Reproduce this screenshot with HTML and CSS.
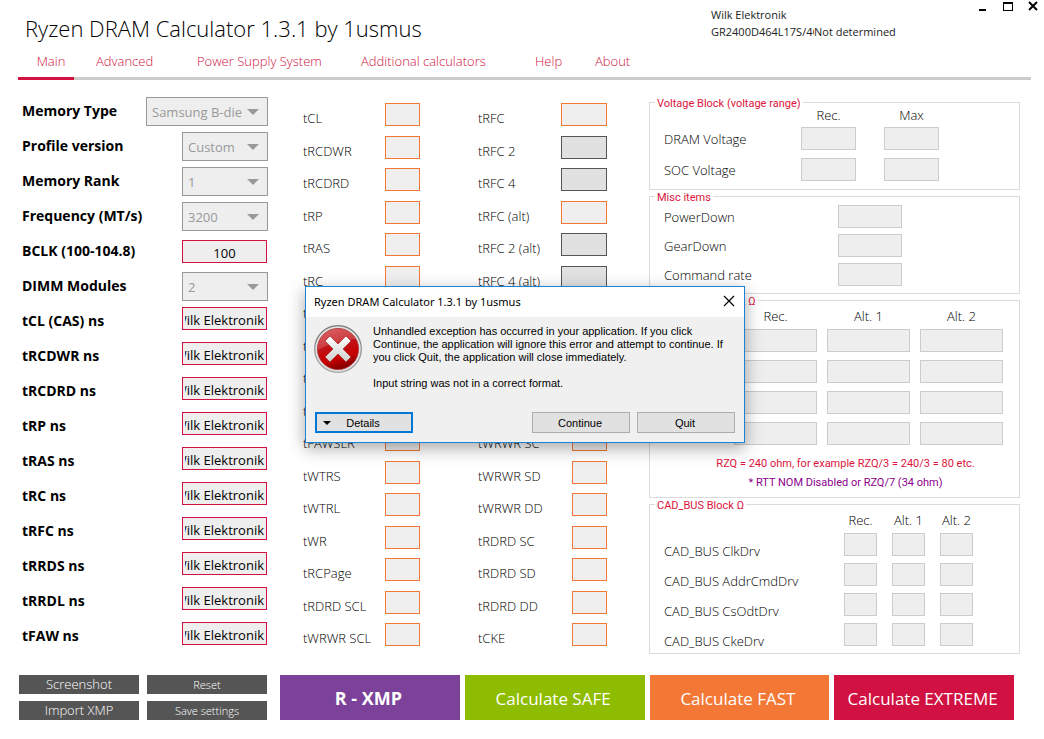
FILE: index.html
```html
<!DOCTYPE html>
<html lang="en">
<head>
<meta charset="utf-8">
<title>Ryzen DRAM Calculator 1.3.1 by 1usmus</title>
<link rel="stylesheet" href="styles.css">
</head>
<body>
<header class="titlebar">
  <h1 class="title">Ryzen DRAM Calculator 1.3.1 by 1usmus</h1>
  <div class="module">
    <div>Wilk Elektronik</div>
    <div class="module-row"><span class="module-part">GR2400D464L17S/4G</span><span>Not determined</span></div>
  </div>
  <div class="window-controls">
    <button class="window-btn" aria-label="Minimize"><svg width="12" height="12" viewBox="0 0 12 12"><path d="M2 8h7v2H2z"/></svg></button>
    <button class="window-btn" aria-label="Maximize"><svg width="12" height="12" viewBox="0 0 12 12"><path fill-rule="evenodd" d="M1 1h10v9H1zM2 3h8v6H2z"/></svg></button>
    <button class="window-btn" aria-label="Close"><svg width="12" height="12" viewBox="0 0 12 12"><path d="M2 1l8 8M10 1l-8 8" fill="none" stroke="#000" stroke-width="2"/></svg></button>
  </div>
</header>

<nav class="tabs">
  <a class="tab tab-active" href="#main">Main</a>
  <a class="tab" href="#advanced">Advanced</a>
  <a class="tab" href="#power">Power Supply System</a>
  <a class="tab" href="#calculators">Additional calculators</a>
  <a class="tab" href="#help">Help</a>
  <a class="tab" href="#about">About</a>
</nav>

<main class="board">
  <section class="fields">
    <div class="field"><label for="memtype">Memory Type</label><span class="pick pick-wide"><select id="memtype" disabled><option>Samsung B-die</option></select></span></div>
    <div class="field"><label for="profile">Profile version</label><span class="pick"><select id="profile" disabled><option>Custom</option></select></span></div>
    <div class="field"><label for="rank">Memory Rank</label><span class="pick"><select id="rank" disabled><option>1</option></select></span></div>
    <div class="field"><label for="freq">Frequency (MT/s)</label><span class="pick"><select id="freq" disabled><option>3200</option></select></span></div>
    <div class="field"><label for="bclk">BCLK (100-104.8)</label><input class="entry entry-center" id="bclk" value="100"></div>
    <div class="field"><label for="dimm">DIMM Modules</label><span class="pick"><select id="dimm" disabled><option>2</option></select></span></div>
    <div class="field field-time"><label for="ns1">tCL (CAS) ns</label><input class="entry" dir="rtl" id="ns1" value="Wilk Elektronik"></div>
    <div class="field field-time"><label for="ns2">tRCDWR ns</label><input class="entry" dir="rtl" id="ns2" value="Wilk Elektronik"></div>
    <div class="field field-time"><label for="ns3">tRCDRD ns</label><input class="entry" dir="rtl" id="ns3" value="Wilk Elektronik"></div>
    <div class="field field-time"><label for="ns4">tRP ns</label><input class="entry" dir="rtl" id="ns4" value="Wilk Elektronik"></div>
    <div class="field field-time"><label for="ns5">tRAS ns</label><input class="entry" dir="rtl" id="ns5" value="Wilk Elektronik"></div>
    <div class="field field-time"><label for="ns6">tRC ns</label><input class="entry" dir="rtl" id="ns6" value="Wilk Elektronik"></div>
    <div class="field field-time"><label for="ns7">tRFC ns</label><input class="entry" dir="rtl" id="ns7" value="Wilk Elektronik"></div>
    <div class="field field-time"><label for="ns8">tRRDS ns</label><input class="entry" dir="rtl" id="ns8" value="Wilk Elektronik"></div>
    <div class="field field-time"><label for="ns9">tRRDL ns</label><input class="entry" dir="rtl" id="ns9" value="Wilk Elektronik"></div>
    <div class="field field-time"><label for="ns10">tFAW ns</label><input class="entry" dir="rtl" id="ns10" value="Wilk Elektronik"></div>
  </section>

  <section class="timings timings-first">
    <div class="timing"><label for="a1">tCL</label><input class="cell" id="a1"></div>
    <div class="timing"><label for="a2">tRCDWR</label><input class="cell" id="a2"></div>
    <div class="timing"><label for="a3">tRCDRD</label><input class="cell" id="a3"></div>
    <div class="timing"><label for="a4">tRP</label><input class="cell" id="a4"></div>
    <div class="timing"><label for="a5">tRAS</label><input class="cell" id="a5"></div>
    <div class="timing"><label for="a6">tRC</label><input class="cell" id="a6"></div>
    <div class="timing"><label for="a7">tRRDS</label><input class="cell" id="a7"></div>
    <div class="timing"><label for="a8">tRRDL</label><input class="cell" id="a8"></div>
    <div class="timing"><label for="a9">tFAW</label><input class="cell" id="a9"></div>
    <div class="timing"><label for="a10">tFAWDLR</label><input class="cell" id="a10"></div>
    <div class="timing"><label for="a11">tFAWSLR</label><input class="cell" id="a11"></div>
    <div class="timing"><label for="a12">tWTRS</label><input class="cell" id="a12"></div>
    <div class="timing"><label for="a13">tWTRL</label><input class="cell" id="a13"></div>
    <div class="timing"><label for="a14">tWR</label><input class="cell" id="a14"></div>
    <div class="timing"><label for="a15">tRCPage</label><input class="cell" id="a15"></div>
    <div class="timing"><label for="a16">tRDRD SCL</label><input class="cell" id="a16"></div>
    <div class="timing"><label for="a17">tWRWR SCL</label><input class="cell" id="a17"></div>
  </section>

  <section class="timings timings-second">
    <div class="timing"><label for="b1">tRFC</label><input class="cell cell-wide" id="b1"></div>
    <div class="timing"><label for="b2">tRFC 2</label><input class="cell cell-wide cell-dark" id="b2"></div>
    <div class="timing"><label for="b3">tRFC 4</label><input class="cell cell-wide cell-dark" id="b3"></div>
    <div class="timing"><label for="b4">tRFC (alt)</label><input class="cell cell-wide" id="b4"></div>
    <div class="timing"><label for="b5">tRFC 2 (alt)</label><input class="cell cell-wide cell-dark" id="b5"></div>
    <div class="timing"><label for="b6">tRFC 4 (alt)</label><input class="cell cell-wide cell-dark" id="b6"></div>
    <div class="timing"><label for="b7">tRTP</label><input class="cell" id="b7"></div>
    <div class="timing"><label for="b8">tRDWR</label><input class="cell" id="b8"></div>
    <div class="timing"><label for="b9">tWRRD</label><input class="cell" id="b9"></div>
    <div class="timing"><label for="b10">tCWL</label><input class="cell" id="b10"></div>
    <div class="timing"><label for="b11">tWRWR SC</label><input class="cell" id="b11"></div>
    <div class="timing"><label for="b12">tWRWR SD</label><input class="cell" id="b12"></div>
    <div class="timing"><label for="b13">tWRWR DD</label><input class="cell" id="b13"></div>
    <div class="timing"><label for="b14">tRDRD SC</label><input class="cell" id="b14"></div>
    <div class="timing"><label for="b15">tRDRD SD</label><input class="cell" id="b15"></div>
    <div class="timing"><label for="b16">tRDRD DD</label><input class="cell" id="b16"></div>
    <div class="timing"><label for="b17">tCKE</label><input class="cell" id="b17"></div>
  </section>

  <section class="panels">
    <fieldset class="panel">
      <legend>Voltage Block (voltage range)</legend>
      <div class="matrix matrix-voltage">
        <span></span><span class="head">Rec.</span><span class="head">Max</span>
        <label for="v1">DRAM Voltage</label><input class="slot" id="v1"><input class="slot" aria-label="DRAM Voltage max">
        <label for="v2">SOC Voltage</label><input class="slot" id="v2"><input class="slot" aria-label="SOC Voltage max">
      </div>
    </fieldset>
    <fieldset class="panel">
      <legend>Misc items</legend>
      <div class="matrix matrix-misc">
        <label for="m1">PowerDown</label><input class="slot" id="m1">
        <label for="m2">GearDown</label><input class="slot" id="m2">
        <label for="m3">Command rate</label><input class="slot" id="m3">
      </div>
    </fieldset>
    <fieldset class="panel">
      <legend>Termination Block Ω</legend>
      <div class="matrix matrix-term">
        <span></span><span class="head">Rec.</span><span class="head">Alt. 1</span><span class="head">Alt. 2</span>
        <label for="t1">procODT</label><input class="slot" id="t1"><input class="slot" aria-label="procODT alt 1"><input class="slot" aria-label="procODT alt 2">
        <label for="t2">RTT NOM</label><input class="slot" id="t2"><input class="slot" aria-label="RTT NOM alt 1"><input class="slot" aria-label="RTT NOM alt 2">
        <label for="t3">RTT WR</label><input class="slot" id="t3"><input class="slot" aria-label="RTT WR alt 1"><input class="slot" aria-label="RTT WR alt 2">
        <label for="t4">RTT PARK</label><input class="slot" id="t4"><input class="slot" aria-label="RTT PARK alt 1"><input class="slot" aria-label="RTT PARK alt 2">
      </div>
      <div class="notes">
        <p class="note">RZQ = 240 ohm, for example RZQ/3 = 240/3 = 80 etc.</p>
        <p class="note note-purple">* RTT NOM Disabled or RZQ/7 (34 ohm)</p>
      </div>
    </fieldset>
    <fieldset class="panel">
      <legend>CAD_BUS Block Ω</legend>
      <div class="matrix matrix-cad">
        <span></span><span class="head">Rec.</span><span class="head">Alt. 1</span><span class="head">Alt. 2</span>
        <label for="c1">CAD_BUS ClkDrv</label><input class="slot" id="c1"><input class="slot" aria-label="ClkDrv alt 1"><input class="slot" aria-label="ClkDrv alt 2">
        <label for="c2">CAD_BUS AddrCmdDrv</label><input class="slot" id="c2"><input class="slot" aria-label="AddrCmdDrv alt 1"><input class="slot" aria-label="AddrCmdDrv alt 2">
        <label for="c3">CAD_BUS CsOdtDrv</label><input class="slot" id="c3"><input class="slot" aria-label="CsOdtDrv alt 1"><input class="slot" aria-label="CsOdtDrv alt 2">
        <label for="c4">CAD_BUS CkeDrv</label><input class="slot" id="c4"><input class="slot" aria-label="CkeDrv alt 1"><input class="slot" aria-label="CkeDrv alt 2">
      </div>
    </fieldset>
  </section>
</main>

<footer class="actions">
  <div class="utility">
    <button class="small-btn small-btn-large-text">Screenshot</button>
    <button class="small-btn">Reset</button>
    <button class="small-btn small-btn-large-text">Import XMP</button>
    <button class="small-btn">Save settings</button>
  </div>
  <div class="calculate">
    <button class="big-btn big-purple">R - XMP</button>
    <button class="big-btn big-green">Calculate SAFE</button>
    <button class="big-btn big-orange">Calculate FAST</button>
    <button class="big-btn big-red">Calculate EXTREME</button>
  </div>
</footer>

<div class="dialog" role="dialog" aria-labelledby="dialog-title">
  <div class="dialog-bar">
    <h2 class="dialog-title" id="dialog-title">Ryzen DRAM Calculator 1.3.1 by 1usmus</h2>
    <button class="window-btn" aria-label="Close dialog"><svg width="12" height="12" viewBox="0 0 12 12"><path d="M1 1l10 10M11 1L1 11" fill="none" stroke="#000" stroke-width="1.2"/></svg></button>
  </div>
  <div class="dialog-body">
    <svg class="dialog-icon" width="48" height="48" viewBox="0 0 48 48" aria-hidden="true">
      <defs>
        <linearGradient id="ring" x1="0" y1="0" x2="0" y2="1"><stop offset="0" stop-color="#777"/><stop offset="1" stop-color="#a5a5a5"/></linearGradient>
        <linearGradient id="ball" x1="0" y1="0" x2="0.3" y2="1"><stop offset="0" stop-color="#d8474a"/><stop offset="0.5" stop-color="#c01317"/><stop offset="0.8" stop-color="#c80000"/><stop offset="1" stop-color="#8e0000"/></linearGradient>
        <linearGradient id="cross" x1="0" y1="0" x2="0" y2="1"><stop offset="0" stop-color="#fff"/><stop offset="1" stop-color="#cfcfcf"/></linearGradient>
      </defs>
      <circle cx="24" cy="24" r="23.3" fill="#e2e2e2" stroke="url(#ring)" stroke-width="1.2"/>
      <circle cx="24" cy="24" r="20.6" fill="url(#ball)" stroke="#a33" stroke-width="0.8"/>
      <path d="M4 25C3 12 14 4 24 4c9 0 15 4 18 10C32 14 17 18 4 25z" fill="#fff" opacity="0.16"/>
      <path d="M16 11l8 8 8-8 5 5-8 8 8 8-5 5-8-8-8 8-5-5 8-8-8-8z" fill="url(#cross)" stroke="#a01518" stroke-width="0.6"/>
    </svg>
    <div class="dialog-text">
      <p>Unhandled exception has occurred in your application. If you click<br>Continue, the application will ignore this error and attempt to continue. If<br>you click Quit, the application will close immediately.</p>
      <p>Input string was not in a correct format.</p>
    </div>
  </div>
  <div class="dialog-actions">
    <button class="dialog-btn dialog-btn-focus"><svg class="details-arrow" width="8" height="4" viewBox="0 0 8 4" aria-hidden="true"><path d="M0 0h8L4 4z"/></svg>Details</button>
    <button class="dialog-btn dialog-btn-push">Continue</button>
    <button class="dialog-btn">Quit</button>
  </div>
</div>
</body>
</html>
```
FILE: styles.css
```css
* { box-sizing: border-box; }
body {
  margin: 0;
  background: #fff;
  color: #000;
  font-family: "Open Sans", "Noto Sans", sans-serif;
  font-size: 13px;
  font-weight: 300;
}
button, input, select { font: inherit; border-radius: 0; }
p, h1, h2 { margin: 0; }

.titlebar { display: flex; height: 47px; padding-left: 25px; }
.title { flex: 1; padding-top: 12px; font-size: 22px; line-height: 32px; font-weight: 300; }
.module { width: 266px; padding-top: 6px; font-size: 11px; line-height: 17px; font-weight: 400; color: #222; }
.module-row { display: flex; white-space: nowrap; }
.module-part { width: 103px; overflow: hidden; }
.window-controls { display: flex; gap: 13px; align-items: start; padding-right: 5px; }
.window-btn { display: flex; padding: 0; border: 0; background: none; }
.window-controls .window-btn { padding-top: 1px; }

.tabs {
  display: grid;
  grid-template-columns: 78px 101px 164px 174px 60px 1fr;
  margin: 0 13px 0 18px;
  border-bottom: 3px solid #ccc;
  line-height: 28px;
}
.tab { color: #d11141; text-decoration: none; height: 30px; }
.tab-active { width: 56px; height: 33px; margin-bottom: -3px; padding-left: 10px; text-align: center; border-bottom: 3px solid #d11141; }

.board {
  display: grid;
  grid-template-columns: 246fr 140fr 136fr 371fr;
  column-gap: 35px;
  padding: 14px 24px 0 22px;
}
.field { display: flex; height: 35px; align-items: center; justify-content: space-between; }
.field label { padding-bottom: 3px; font-size: 14px; font-weight: 700; }
.field-time { align-items: start; padding-top: 3px; }
.field-time label { padding-bottom: 0; line-height: 28px; }
.pick { position: relative; width: 86px; height: 29px; }
.pick-wide { width: 122px; }
.pick select {
  width: 100%;
  height: 100%;
  padding: 1px 5px 0;
  appearance: none;
  border: 1px solid #999;
  background: #eee;
  color: #999;
  opacity: 1;
  font-weight: 400;
}
.pick::after {
  content: "";
  position: absolute;
  top: 12px;
  right: 9px;
  border: 6px solid transparent;
  border-top-color: #999;
  border-bottom: 0;
}
.entry {
  width: 85px;
  height: 23px;
  margin-right: 1px;
  padding: 2px 2px 0;
  border: 1px solid #d11141;
  background: #eee;
  font-weight: 400;
}
.entry-center { text-align: center; }

.timings { display: flex; flex-direction: column; justify-content: space-between; padding-top: 9px; }
.timings-first { padding-right: 23px; }
.timings-second { padding-right: 7px; }
.timing { display: flex; height: 31px; justify-content: space-between; white-space: nowrap; line-height: 30px; }
.cell { width: 35px; height: 23px; padding: 0 2px; border: 1px solid #f47835; background: #efefef; }
.cell-wide { width: 46px; }
.cell-dark { border-color: #555; background: #e1e1e1; }

.panels { display: flex; flex-direction: column; justify-content: space-between; padding-top: 3px; }
.panel { min-width: 0; margin: 0; padding: 0; border: 1px solid #dbdbdb; }
.panel legend {
  margin-left: 5px;
  padding: 4px 2px 0;
  color: #dc143c;
  font-family: Roboto, "Open Sans", sans-serif;
  font-size: 11px;
  line-height: 6px;
  font-weight: 400;
}
.matrix { display: grid; white-space: nowrap; align-items: start; }
.head { text-align: center; line-height: 16px; }
.slot { width: 100%; min-width: 0; height: 23px; padding: 0 2px; border: 1px solid #ccc; background: #eee; }
.matrix-voltage { grid-template-columns: 1fr 55px 55px; grid-template-rows: 20px; grid-auto-rows: 31px; column-gap: 28px; padding: 0 80px 0 14px; line-height: 24px; }
.matrix-misc { grid-template-columns: 1fr 64px; grid-auto-rows: 29px; padding: 4px 117px 1px 14px; line-height: 24px; }
.matrix-term { grid-template-columns: 1fr 83px 83px 83px; grid-template-rows: 24px; grid-auto-rows: 31px; column-gap: 10px; padding: 0 16px 0 14px; line-height: 24px; }
.matrix-cad { grid-template-columns: 1fr 33px 33px 33px; grid-template-rows: 24px; grid-auto-rows: 30px; column-gap: 15px; padding: 0 46px 0 14px; line-height: 36px; }
.matrix-term .head, .matrix-cad .head { line-height: 22px; }
.matrix-cad .head { display: flex; justify-content: center; }
.notes { padding: 1px 0 5px 22px; text-align: center; }
.note { color: #dc143c; font-family: Roboto, "Open Sans", sans-serif; font-size: 11px; line-height: 19px; font-weight: 400; }
.note-purple { color: #8b008b; }

.actions { display: grid; grid-template-columns: 248fr 734fr; column-gap: 13px; padding: 21px 30px 19px 19px; }
.utility { display: grid; grid-template-columns: 1fr 1fr; gap: 7px 8px; }
.small-btn { height: 19px; padding: 0; border: 0; background: #555; color: #fff; font-size: 11px; line-height: 19px; }
.small-btn-large-text { font-size: 13px; }
.calculate { display: grid; grid-template-columns: repeat(4, 1fr); gap: 5px; }
.big-btn { height: 45px; padding: 1px 3px 0 0; border: 0; color: #fff; font-size: 17px; font-weight: 400; white-space: nowrap; }
.big-purple { background: #7c4199; font-size: 18px; font-weight: 700; }
.big-green { background: #8ebc00; }
.big-orange { background: #f47835; }
.big-red { background: #d11141; }

.dialog {
  position: absolute;
  top: 286px;
  left: 305px;
  width: 440px;
  border: 1px solid #1883d7;
  background: #f0f0f0;
  box-shadow: 0 5px 16px rgba(0, 0, 0, 0.35);
  font-family: "Liberation Sans", Arial, sans-serif;
  font-size: 11px;
  font-weight: 400;
}
.dialog-bar { display: flex; height: 30px; align-items: center; justify-content: space-between; padding: 0 9px 2px 8px; background: #fff; }
.dialog-title { font-family: "Noto Sans", sans-serif; font-size: 11px; font-weight: 400; }
.dialog-body { display: flex; gap: 11px; padding: 8px 8px 0; }
.dialog-text { line-height: 13px; white-space: nowrap; }
.dialog-text p + p { margin-top: 13px; }
.dialog-actions { display: flex; gap: 7px; padding: 22px 9px 9px; }
.dialog-btn { position: relative; width: 98px; height: 21px; padding: 0 2px 0 0; border: 1px solid #adadad; background: #e1e1e1; }
.dialog-btn-focus { border: 2px solid #0078d7; }
.dialog-btn-push { margin-left: auto; }
.details-arrow { position: absolute; top: 7px; left: 6px; }
```
